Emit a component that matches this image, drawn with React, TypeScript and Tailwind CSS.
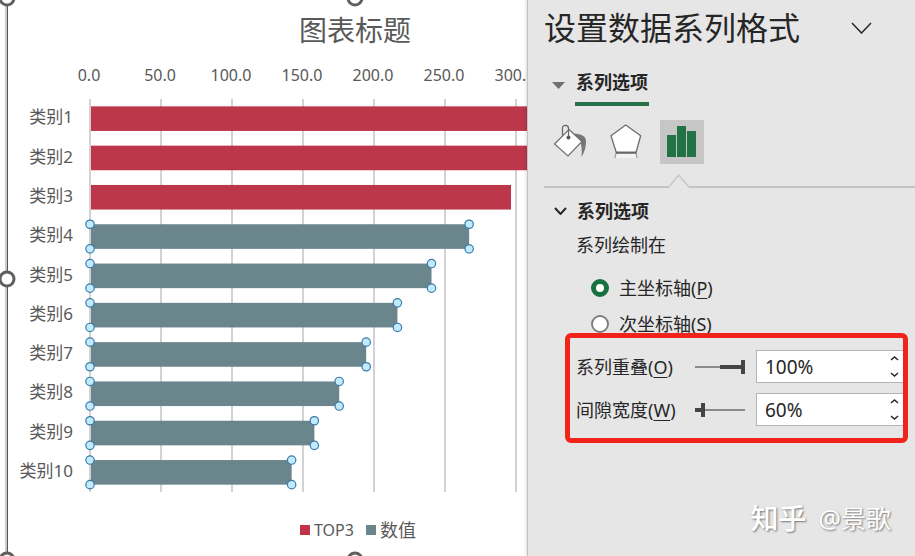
import { useState } from "react";

const rows = [
  { name: "类别1", value: 365, top: true },
  { name: "类别2", value: 329, top: true },
  { name: "类别3", value: 296.5, top: true },
  { name: "类别4", value: 267, top: false },
  { name: "类别5", value: 240.5, top: false },
  { name: "类别6", value: 216.5, top: false },
  { name: "类别7", value: 194.5, top: false },
  { name: "类别8", value: 175.5, top: false },
  { name: "类别9", value: 158, top: false },
  { name: "类别10", value: 142, top: false },
];

const ticks = [0, 50, 100, 150, 200, 250, 300];

const PLOT_LEFT = 83;
const PLOT_TOP = 43;
const STEP = 39.3;
const BAR = 24.6;
const SCALE = 1.42;

function BarChart() {
  return (
    <svg width="689" height="440" className="block" role="img" aria-label="图表标题">
      {ticks.map((t) => (
        <g key={t}>
          <text
            x={PLOT_LEFT + t * SCALE - 1}
            y={25}
            textAnchor="middle"
            className="fill-[#595959] text-[16px]"
          >
            {t.toFixed(1)}
          </text>
          <rect
            x={PLOT_LEFT + t * SCALE - 1}
            y={PLOT_TOP}
            width="2"
            height={STEP * 10}
            fill="#d2d2d2"
          />
        </g>
      ))}
      {rows.map((r, i) => {
        const y = PLOT_TOP + i * STEP + (STEP - BAR) / 2;
        const end = PLOT_LEFT + r.value * SCALE;
        return (
          <g key={r.name}>
            <text
              x={66}
              y={y + 17}
              textAnchor="end"
              className="fill-[#595959] text-[17px]"
            >
              {r.name}
            </text>
            <rect
              x={PLOT_LEFT + 1}
              y={y}
              width={end - PLOT_LEFT - 1}
              height={BAR}
              fill={r.top ? "#bc374a" : "#6a858c"}
            />
            {!r.top &&
              [PLOT_LEFT, end].map((x) =>
                [y, y + BAR].map((cy) => (
                  <circle
                    key={`${x}-${cy}`}
                    cx={x}
                    cy={cy}
                    r="4.2"
                    fill="#c2eafe"
                    stroke="#3a7ca8"
                    strokeWidth="1.2"
                  />
                ))
              )}
          </g>
        );
      })}
    </svg>
  );
}

function Handle({ className }: { className: string }) {
  return (
    <span
      className={`absolute size-[17px] -translate-x-1/2 -translate-y-1/2 rounded-full border-3 border-[#5f5f5f] bg-white ${className}`}
    />
  );
}

function Chart() {
  return (
    <section className="min-w-0 flex-1 overflow-hidden bg-white">
      <div className="relative -mt-0.5 ml-[5px] flex h-[562px] w-[698px] flex-col border-l-2 border-[#cacaca] text-[#595959] shadow-[inset_1px_0_#555]">
        <h1 className="mt-3 text-center text-[28px] leading-[40px]">图表标题</h1>
        <div className="mt-1.5">
          <BarChart />
        </div>
        <div className="mt-[22px] flex items-center justify-center gap-3 pl-1.5 leading-6">
          <span className="flex items-center gap-1 text-[16px]">
            <i className="size-2.5 bg-[#c0344a]" />
            TOP3
          </span>
          <span className="flex items-center gap-1 text-[18px]">
            <i className="size-2.5 bg-[#6a858c]" />
            数值
          </span>
        </div>
        <Handle className="left-0 top-0" />
        <Handle className="left-1/2 top-0" />
        <Handle className="left-0 top-1/2" />
        <Handle className="left-0 top-full" />
        <Handle className="left-1/2 top-full" />
      </div>
    </section>
  );
}

function BucketIcon() {
  return (
    <svg width="44" height="44" viewBox="0 0 44 44" fill="none">
      <path d="M26 13.5C33 14 38 16 38 21C38 28 36 33 33.5 37C34 31 34 26 32 21Z" fill="#777" />
      <path d="M21 9.5L34 21.5L20 36L6.5 24Z" fill="#fff" stroke="#6e6e6e" strokeWidth="1.2" />
      <path d="M14.5 15.5V8C14.5 4.5 20.5 4.5 20.5 8.5V17" stroke="#666" strokeWidth="1.2" />
      <circle cx="20.5" cy="17.5" r="2" fill="#555" />
    </svg>
  );
}

function PentagonIcon() {
  return (
    <svg width="44" height="44" viewBox="0 0 44 44" fill="none">
      <path d="M12 33H32L33 38H11Z" fill="#f2f2f2" />
      <path d="M12 33L11 38M32 33L33 38" stroke="#999" strokeWidth="1.2" />
      <path d="M21.7 5L36.7 15.7L32 32.5H12.3L7 15.7Z" fill="#fff" stroke="#6e6e6e" strokeWidth="1.3" />
      <path d="M12 32.7H32.3" stroke="#666" strokeWidth="2" />
    </svg>
  );
}

function BarsIcon() {
  return (
    <svg width="44" height="44" viewBox="0 0 44 44" fill="#217346">
      <path d="M7 15H16V37H7ZM17 6H26V37H17ZM27 11H36V37H27Z" />
    </svg>
  );
}

function Chevron({ w, h, up, stroke = 1.5 }: { w: number; h: number; up?: boolean; stroke?: number }) {
  const d = up ? `M1 ${h - 1}L${w / 2} 1L${w - 1} ${h - 1}` : `M1 1L${w / 2} ${h - 1}L${w - 1} 1`;
  return (
    <svg width={w} height={h} fill="none" stroke="#262626" strokeWidth={stroke}>
      <path d={d} />
    </svg>
  );
}

type FieldProps = {
  id: string;
  label: string;
  hotkey: string;
  min: number;
  max: number;
  origin: number;
  initial: number;
};

function PercentField({ id, label, hotkey, min, max, origin, initial }: FieldProps) {
  const [value, setValue] = useState(initial);
  const pct = (n: number) => ((n - min) / (max - min)) * 100;
  const from = Math.min(pct(value), pct(origin));
  const size = Math.abs(pct(value) - pct(origin));
  const change = (n: number) => setValue(Math.max(min, Math.min(max, n)));

  return (
    <div className="flex items-center">
      <label htmlFor={id} className="w-[119px] shrink-0">
        {label}(<u className="underline-offset-3">{hotkey}</u>)
      </label>
      <div className="relative flex h-3.5 w-[50px] shrink-0 items-center">
        <span className="h-0.5 w-full bg-[#8a8a8a]" />
        <span
          className="absolute h-1 bg-[#444]"
          style={{ left: `${from}%`, width: `${size}%` }}
        />
        <input
          type="range"
          aria-label={label}
          min={min}
          max={max}
          value={value}
          onChange={(e) => change(Number(e.target.value))}
          className="absolute inset-0 m-0 w-full appearance-none bg-transparent [&::-webkit-slider-thumb]:h-3.5 [&::-webkit-slider-thumb]:w-1 [&::-webkit-slider-thumb]:appearance-none [&::-webkit-slider-thumb]:bg-[#444]"
        />
      </div>
      <div className="ml-[11px] flex h-[33px] min-w-0 flex-1 border border-[#b4b4b4] bg-white">
        <input
          id={id}
          type="text"
          value={`${value}%`}
          onChange={(e) => change(parseInt(e.target.value) || 0)}
          className="w-full min-w-0 flex-1 bg-transparent pl-2 text-[19px] outline-none"
        />
        <div className="flex w-5 flex-col">
          <button aria-label="增加" className="flex flex-1 items-center justify-center" onClick={() => change(value + 1)}>
            <Chevron w={9} h={5} up />
          </button>
          <button aria-label="减少" className="flex flex-1 items-center justify-center" onClick={() => change(value - 1)}>
            <Chevron w={9} h={5} />
          </button>
        </div>
      </div>
    </div>
  );
}

function FormatPanel() {
  const [axis, setAxis] = useState("P");
  const axes = [
    { key: "P", label: "主坐标轴" },
    { key: "S", label: "次坐标轴" },
  ];

  return (
    <aside className="relative w-[388px] shrink-0 border-l border-[#c2c2c2] bg-[#e6e6e6] pl-4 text-[18px] leading-6 text-[#262626] shadow-[-1px_0_3px_#0002]">
      <header className="flex items-center justify-between pr-[43px] pt-2">
        <h2 className="text-[32px] leading-[40px]">设置数据系列格式</h2>
        <button aria-label="任务窗格选项">
          <Chevron w={21} h={12} />
        </button>
      </header>

      <div className="mt-[22px] flex gap-2.5 pl-2">
        <svg width="13" height="7" className="mt-3 fill-[#707070]">
          <path d="M0 0H13L6.5 7Z" />
        </svg>
        <button className="border-b-4 border-[#267349] px-px pb-2 font-bold">系列选项</button>
      </div>

      <div className="ml-1 mt-3.5 flex gap-3">
        <button aria-label="填充与线条">
          <BucketIcon />
        </button>
        <button aria-label="效果">
          <PentagonIcon />
        </button>
        <button aria-label="系列选项" className="bg-[#c6c6c6]">
          <BarsIcon />
        </button>
      </div>

      <div className="mt-2.5 flex items-end">
        <span className="h-0.5 w-[125px] bg-[#c4c4c4]" />
        <svg width="20" height="14" fill="none" stroke="#c8c8c8" strokeWidth="1.5">
          <path d="M0 13L9.5 1L20 13" />
        </svg>
        <span className="h-0.5 flex-1 bg-[#c4c4c4]" />
      </div>

      <button className="mt-[11px] flex items-center gap-2.5 pl-2.5 font-bold">
        <Chevron w={13} h={8} stroke={2} />
        系列选项
      </button>

      <div className="ml-8 mt-2.5">系列绘制在</div>
      <div className="ml-[47px] mt-[19px] flex flex-col gap-3">
        {axes.map((a) => (
          <label key={a.key} className="flex items-center gap-2.5">
            <input
              type="radio"
              name="axis"
              checked={axis === a.key}
              onChange={() => setAxis(a.key)}
              className="size-[18px] appearance-none rounded-full border-2 border-[#808080] bg-white checked:border-5 checked:border-[#17703f]"
            />
            <span>
              {a.label}(<u className="underline-offset-3">{a.key}</u>)
            </span>
          </label>
        ))}
      </div>

      <div className="relative ml-8 mr-2.5 mt-3.5 flex flex-col gap-2.5">
        <PercentField id="overlap" label="系列重叠" hotkey="O" min={-100} max={100} origin={0} initial={100} />
        <PercentField id="gap" label="间隙宽度" hotkey="W" min={0} max={500} origin={0} initial={60} />
        <div className="pointer-events-none absolute -inset-y-[17px] -left-[11px] -right-[3px] rounded-md border-5 border-[#f0241b]" />
      </div>

      <div className="absolute bottom-5 right-6 flex items-center gap-3 whitespace-nowrap text-[25px] leading-9 text-white [text-shadow:1px_1px_2px_#777]">
        <span className="text-[28px] font-medium">知乎</span>
        <span>@景歌</span>
      </div>
    </aside>
  );
}

export default function App() {
  return (
    <main className="flex h-screen overflow-hidden bg-white font-['Noto_Sans','Noto_Sans_CJK_SC',sans-serif]">
      <Chart />
      <FormatPanel />
    </main>
  );
}
